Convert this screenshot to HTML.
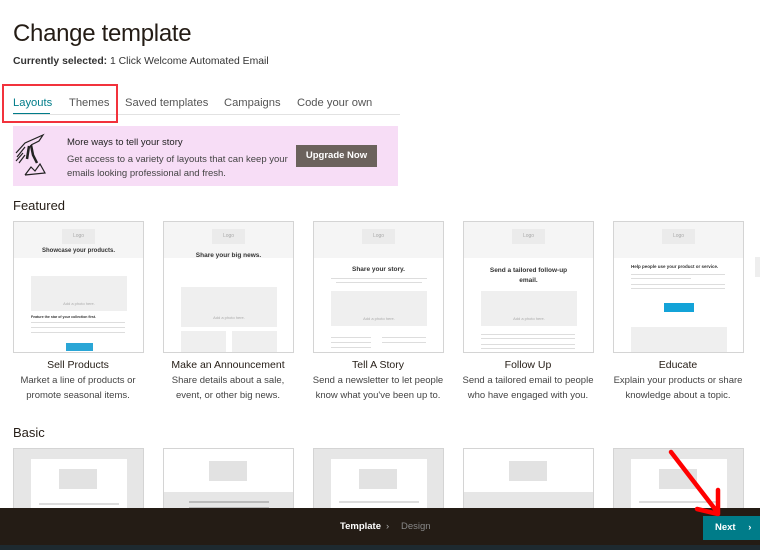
<!DOCTYPE html>
<html><head><meta charset="utf-8"><style>
*{margin:0;padding:0;box-sizing:border-box}
body{width:760px;height:550px;overflow:hidden;background:#fff;font-family:"Liberation Sans",sans-serif;color:#241c15;position:relative}
.abs{position:absolute}
h1{position:absolute;left:13px;top:20px;font-size:24px;font-weight:normal;letter-spacing:-0.3px}
.sel{left:13px;top:56px;font-size:10.4px;color:#333}
.tabs{left:13px;top:97px;font-size:11.2px;color:#555}
.tabs span{position:absolute;white-space:nowrap}
.card{position:absolute;width:131px;height:132px;border:1px solid #d4d4d4;background:#fff;overflow:hidden}
.hd{position:absolute;left:0;top:0;width:100%;height:36px;background:#f5f5f5}
.logo{position:absolute;left:48px;top:7px;width:33px;height:15px;background:#ebebeb;font-size:5px;color:#aaa;text-align:center;line-height:15px}
.ph{position:absolute;background:#efefef;font-size:4px;color:#aaa;text-align:center}
.t{position:absolute;width:100%;text-align:center;font-weight:bold;color:#333}
.ln{position:absolute;height:1px;background:#ddd}
.cap{position:absolute;width:150px;text-align:center;font-size:9.5px;line-height:15px;color:#444;top:358px}
.cap b{display:block;font-size:10.5px;color:#241c15;font-weight:normal;margin-bottom:0px}
.bc{position:absolute;top:448px;width:131px;height:70px;border:1px solid #d4d4d4;background:#e6e6e6}
</style></head><body>
<h1>Change template</h1>
<div class="abs sel"><b>Currently selected:</b> 1 Click Welcome Automated Email</div>
<div class="abs tabs">
<span style="left:0;color:#007c89">Layouts</span>
<span style="left:56px">Themes</span>
<span style="left:112px">Saved templates</span>
<span style="left:211px">Campaigns</span>
<span style="left:284px">Code your own</span>
</div>
<div class="abs" style="left:13px;top:113px;width:37px;height:2px;background:#007c89"></div>
<div class="abs" style="left:13px;top:114px;width:387px;height:1px;background:#e2e2e2"></div>
<div class="abs" style="left:2px;top:84px;width:116px;height:39px;border:2px solid #f2323c"></div>
<div class="abs" style="left:13px;top:126px;width:385px;height:60px;background:#f7ddf6"></div>
<svg class="abs" style="left:13px;top:133px" width="45" height="48" viewBox="0 0 45 48" fill="none" stroke="#222" stroke-width="1.2">
<path d="M3 20 L12 10 L30 2 L26 8 L18 12"/>
<path d="M18 12 L20 22 L24 30 M16 13 L14 26" stroke-width="2.5"/>
<path d="M4 24 L12 14 M3 28 L10 20 M6 30 L12 22"/>
<path d="M12 42 L18 34 L22 38 L27 31 L32 40 L12 42"/>
</svg>
<div class="abs" style="left:67px;top:137px;font-size:9.5px;color:#222">More ways to tell your story</div>
<div class="abs" style="left:67px;top:153px;font-size:9.5px;line-height:14px;color:#444">Get access to a variety of layouts that can keep your<br>emails looking professional and fresh.</div>
<div class="abs" style="left:296px;top:145px;width:81px;height:22px;background:#6b625c;color:#fff;font-size:9.5px;font-weight:bold;text-align:center;line-height:22px">Upgrade Now</div>
<div class="abs" style="left:13px;top:198px;font-size:13px">Featured</div>

<div class="card" style="left:13px;top:221px"><div class="hd"></div><div class="logo">Logo</div>
<div class="t" style="top:26px;font-size:6px">Showcase your products.</div>
<div class="ph" style="left:17px;top:54px;width:96px;height:35px;line-height:55px">Add a photo here.</div>
<div class="t" style="top:93px;font-size:3.5px;text-align:left;left:17px">Feature the star of your collection first.</div>
<div class="ln" style="left:17px;top:100px;width:94px"></div><div class="ln" style="left:17px;top:105px;width:94px"></div><div class="ln" style="left:17px;top:110px;width:94px"></div>
<div class="abs" style="left:52px;top:121px;width:27px;height:8px;background:#2aa6d6"></div></div>

<div class="card" style="left:163px;top:221px"><div class="hd"></div><div class="logo">Logo</div>
<div class="t" style="top:30px;font-size:6.5px">Share your big news.</div>
<div class="ph" style="left:17px;top:65px;width:96px;height:40px;line-height:62px">Add a photo here.</div>
<div class="ph" style="left:17px;top:109px;width:45px;height:25px"></div><div class="ph" style="left:68px;top:109px;width:45px;height:25px"></div></div>

<div class="card" style="left:313px;top:221px"><div class="hd"></div><div class="logo">Logo</div>
<div class="t" style="top:44px;font-size:6.5px">Share your story.</div>
<div class="ln" style="left:17px;top:56px;width:96px"></div><div class="ln" style="left:22px;top:60px;width:86px"></div>
<div class="ph" style="left:17px;top:69px;width:96px;height:35px;line-height:55px">Add a photo here.</div>
<div class="ln" style="left:17px;top:115px;width:40px"></div><div class="ln" style="left:68px;top:115px;width:44px"></div><div class="ln" style="left:17px;top:120px;width:40px"></div><div class="ln" style="left:68px;top:120px;width:44px"></div><div class="ln" style="left:17px;top:125px;width:40px"></div></div>

<div class="card" style="left:463px;top:221px"><div class="hd"></div><div class="logo">Logo</div>
<div class="t" style="top:44px;font-size:6.5px;line-height:10px">Send a tailored follow-up<br>email.</div>
<div class="ph" style="left:17px;top:69px;width:96px;height:35px;line-height:55px">Add a photo here.</div>
<div class="ln" style="left:17px;top:112px;width:94px"></div><div class="ln" style="left:17px;top:116px;width:94px"></div><div class="ln" style="left:17px;top:122px;width:94px"></div><div class="ln" style="left:17px;top:126px;width:94px"></div></div>

<div class="card" style="left:613px;top:221px"><div class="hd"></div><div class="logo">Logo</div>
<div class="t" style="top:42px;font-size:4.5px;text-align:left;left:17px">Help people use your product or service.</div>
<div class="ln" style="left:17px;top:52px;width:94px"></div><div class="ln" style="left:17px;top:56px;width:60px"></div><div class="ln" style="left:17px;top:62px;width:94px"></div><div class="ln" style="left:17px;top:66px;width:94px"></div>
<div class="abs" style="left:50px;top:81px;width:30px;height:9px;background:#13a3d8"></div>
<div class="ph" style="left:17px;top:105px;width:96px;height:30px"></div></div>

<div class="cap" style="left:3px"><b>Sell Products</b>Market a line of products or<br>promote seasonal items.</div>
<div class="cap" style="left:153px"><b>Make an Announcement</b>Share details about a sale,<br>event, or other big news.</div>
<div class="cap" style="left:303px"><b>Tell A Story</b>Send a newsletter to let people<br>know what you've been up to.</div>
<div class="cap" style="left:453px"><b>Follow Up</b>Send a tailored email to people<br>who have engaged with you.</div>
<div class="cap" style="left:603px"><b>Educate</b>Explain your products or share<br>knowledge about a topic.</div>

<div class="abs" style="left:13px;top:425px;font-size:13px">Basic</div>
<div class="bc" style="left:13px"><div class="abs" style="left:17px;top:10px;width:96px;height:60px;background:#fff"></div><div class="abs" style="left:45px;top:20px;width:38px;height:20px;background:#e2e2e2"></div><div class="abs" style="left:25px;top:54px;width:80px;height:2px;background:#ddd"></div></div>
<div class="bc" style="left:163px;background:#fff"><div class="abs" style="left:45px;top:12px;width:38px;height:20px;background:#e2e2e2"></div><div class="abs" style="left:0;top:43px;width:129px;height:30px;background:#e6e6e6"></div><div class="abs" style="left:25px;top:52px;width:80px;height:2px;background:#bbb"></div><div class="abs" style="left:25px;top:58px;width:80px;height:2px;background:#bbb"></div></div>
<div class="bc" style="left:313px"><div class="abs" style="left:17px;top:10px;width:96px;height:60px;background:#fff"></div><div class="abs" style="left:45px;top:20px;width:38px;height:20px;background:#e2e2e2"></div><div class="abs" style="left:25px;top:52px;width:80px;height:2px;background:#ddd"></div></div>
<div class="bc" style="left:463px;background:#fff"><div class="abs" style="left:45px;top:12px;width:38px;height:20px;background:#e2e2e2"></div><div class="abs" style="left:0;top:43px;width:129px;height:30px;background:#e6e6e6"></div></div>
<div class="bc" style="left:613px"><div class="abs" style="left:17px;top:10px;width:96px;height:60px;background:#fff"></div><div class="abs" style="left:45px;top:20px;width:38px;height:20px;background:#e2e2e2"></div><div class="abs" style="left:25px;top:52px;width:80px;height:2px;background:#ddd"></div></div>

<div class="abs" style="left:755px;top:257px;width:5px;height:20px;background:#eee"></div>
<div class="abs" style="left:0;top:508px;width:760px;height:42px;background:#241c15"></div>
<div class="abs" style="left:0;top:545px;width:760px;height:5px;background:#1e2a30"></div>
<div class="abs" style="left:340px;top:521px;font-size:9.5px;color:#fff;font-weight:bold">Template</div>
<div class="abs" style="left:386px;top:521px;font-size:9.5px;color:#aaa">›</div>
<div class="abs" style="left:401px;top:521px;font-size:9.5px;color:#888">Design</div>
<div class="abs" style="left:703px;top:516px;width:57px;height:24px;background:#007c89;color:#fff;font-size:9.5px;font-weight:bold;line-height:24px;padding-left:12px">Next <span style="margin-left:10px">›</span></div>
<svg class="abs" style="left:0;top:0" width="760" height="550" fill="none" stroke="#f00" stroke-width="4.5" stroke-linecap="round" stroke-linejoin="round">
<path d="M671 452 L718 513 M718 490 L718 514 L697 509"/>
</svg>
</body></html>
